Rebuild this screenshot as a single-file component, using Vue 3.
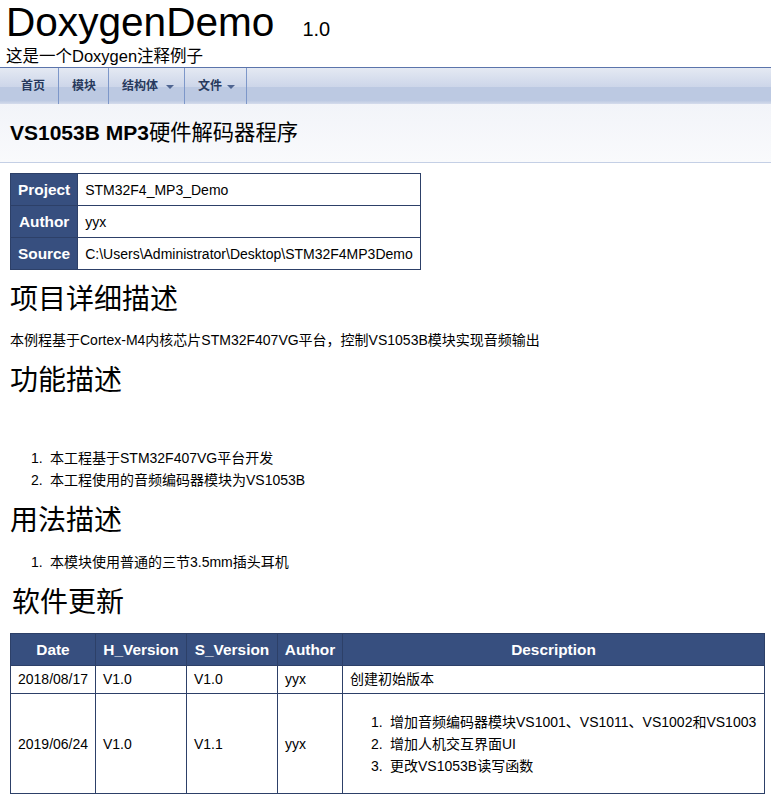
<script setup>
const info = [
  ['Project', 'STM32F4_MP3_Demo'],
  ['Author', 'yyx'],
  ['Source', 'C:\\Users\\Administrator\\Desktop\\STM32F4MP3Demo']
]
const menu = [
  { label: '首页', cls: 'first' },
  { label: '模块' },
  { label: '结构体', arrow: true, cls: 'struct' },
  { label: '文件', arrow: true, cls: 'files' }
]
const desc = ['增加音频编码器模块VS1001、VS1011、VS1002和VS1003', '增加人机交互界面UI', '更改VS1053B读写函数']
</script>

<template>
  <div class="page">
    <div class="title-area">
      <div class="project"><span class="name">DoxygenDemo</span><span class="version">1.0</span></div>
      <div class="brief">这是一个Doxygen注释例子</div>
    </div>

    <div class="navbar">
      <a v-for="m in menu" :key="m.label" class="nav-item" :class="m.cls">
        {{ m.label }}<span v-if="m.arrow" class="caret"></span>
      </a>
    </div>

    <div class="header"><span class="head-title">VS1053B MP3<span class="cjk">硬件解码器程序</span></span></div>

    <table class="info">
      <tr v-for="row in info" :key="row[0]">
        <th>{{ row[0] }}</th>
        <td>{{ row[1] }}</td>
      </tr>
    </table>

    <h1 class="h-detail">项目详细描述</h1>
    <p class="para">本例程基于Cortex-M4内核芯片STM32F407VG平台，控制VS1053B模块实现音频输出</p>

    <h1 class="h-func">功能描述</h1>
    <ol class="list list-func">
      <li>本工程基于STM32F407VG平台开发</li>
      <li>本工程使用的音频编码器模块为VS1053B</li>
    </ol>

    <h1 class="h-usage">用法描述</h1>
    <ol class="list list-usage">
      <li>本模块使用普通的三节3.5mm插头耳机</li>
    </ol>

    <h1 class="h-update">软件更新</h1>
    <table class="changes">
      <colgroup>
        <col class="c-date" />
        <col class="c-ver" />
        <col class="c-ver" />
        <col class="c-author" />
        <col />
      </colgroup>
      <tr class="head">
        <th>Date</th>
        <th>H_Version</th>
        <th>S_Version</th>
        <th>Author</th>
        <th>Description</th>
      </tr>
      <tr class="row-one">
        <td>2018/08/17</td>
        <td>V1.0</td>
        <td>V1.0</td>
        <td>yyx</td>
        <td>创建初始版本</td>
      </tr>
      <tr class="row-two">
        <td>2019/06/24</td>
        <td>V1.0</td>
        <td>V1.1</td>
        <td>yyx</td>
        <td>
          <ol class="list cell-list">
            <li v-for="d in desc" :key="d">{{ d }}</li>
          </ol>
        </td>
      </tr>
    </table>
  </div>
</template>

<style>
html, body {
  margin: 0;
  background: #fff;
}
</style>

<style scoped>
.page {
  width: 771px;
  height: 798px;
  overflow: hidden;
  font: 14px/22px "Liberation Sans", "Noto Sans CJK SC", sans-serif;
  color: #000;
}
.title-area {
  height: 67px;
  padding-left: 6px;
  overflow: hidden;
}
.project {
  height: 45px;
  line-height: 45px;
}
.name {
  font-size: 40.6px;
}
.version {
  font-size: 20px;
  margin-left: 28px;
}
.brief {
  font-size: 16.5px;
  line-height: 23px;
}
.navbar {
  height: 36px;
  display: flex;
  padding-left: 6px;
  border-top: 1px solid #5b74ab;
  background: linear-gradient(#e4e9f3 0%, #cdd6e9 52%, #bcc9e2 53%, #bcc9e2 90%, #d5dcec 100%);
}
.nav-item {
  display: flex;
  align-items: center;
  padding: 0 12px 0 13px;
  font-size: 12px;
  font-weight: bold;
  color: #283a5d;
  border-right: 1px solid #7d97c9;
}
.first {
  padding: 0 13px 0 15px;
}
.caret {
  display: inline-block;
  margin-top: 1px;
  border: 4px solid transparent;
  border-top-color: #4f6591;
  border-bottom: 0;
}
.struct {
  padding-right: 10px;
}
.struct .caret {
  margin-left: 8px;
}
.files {
  padding-right: 11px;
}
.files .caret {
  margin-left: 5px;
}
.header {
  height: 59px;
  box-sizing: border-box;
  display: flex;
  align-items: center;
  padding-left: 10px;
  background: linear-gradient(#f2f4f9, #f9fafc);
  border-bottom: 1px solid #c4cfe5;
}
.head-title {
  font-size: 21px;
  font-weight: bold;
  color: #000;
}
.cjk {
  font-size: 21.3px;
  font-weight: normal;
}
table {
  border-collapse: collapse;
  margin-left: 10px;
}
th {
  background: #374f7f;
  color: #fff;
  font-size: 15.4px;
  font-weight: bold;
  border: 1px solid #2d4068;
  padding: 0;
}
td {
  border: 1px solid #2d4068;
  padding: 0 7px;
}
.info {
  margin-top: 10px;
}
.info th,
.info td {
  height: 31px;
  padding: 0 7px;
}
h1 {
  margin: 0 0 0 10px;
  font-size: 28px;
  font-weight: normal;
  line-height: 40px;
}
.h-detail {
  margin-top: 10px;
}
.para {
  margin: 9px 0 0 10px;
  line-height: 22px;
}
.h-func {
  margin-top: 10px;
}
.list {
  margin: 0;
  padding-left: 50px;
  line-height: 22px;
  list-style: none;
  counter-reset: item;
}
.list li {
  counter-increment: item;
}
.list li::before {
  content: counter(item) ".";
  display: inline-block;
  width: 19px;
  margin-left: -19px;
}
.list-func {
  margin-top: 46px;
}
.h-usage {
  margin-top: 10px;
}
.list-usage {
  margin-top: 10px;
}
.h-update {
  margin: 10px 0 0 12px;
}
.changes {
  margin-top: 10px;
  width: 755px;
  table-layout: fixed;
}
.c-date {
  width: 85px;
}
.c-ver {
  width: 91px;
}
.c-author {
  width: 65px;
}
.head th {
  height: 31px;
}
.row-one td {
  height: 28px;
  padding-bottom: 2px;
  box-sizing: border-box;
}
.row-two td {
  height: 99px;
}
.cell-list {
  padding-left: 40px;
}
</style>
